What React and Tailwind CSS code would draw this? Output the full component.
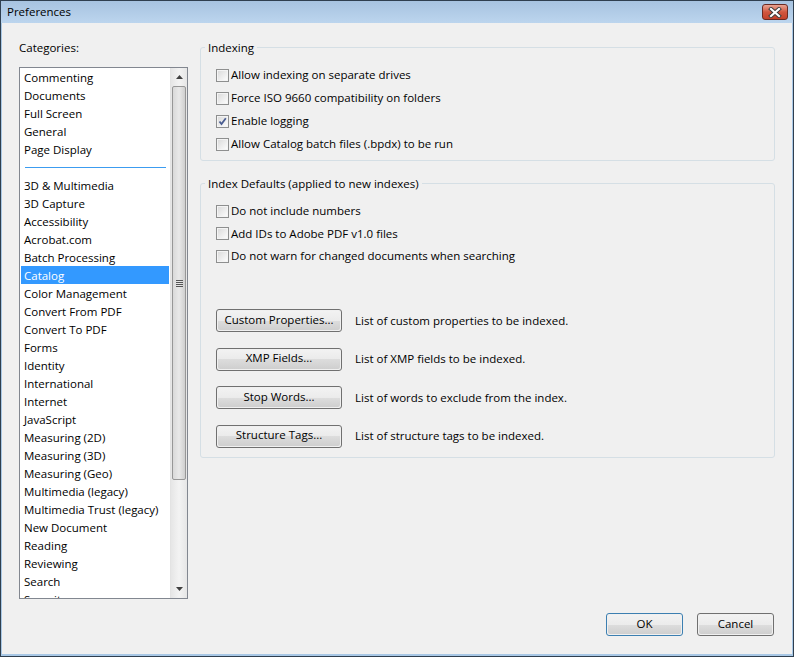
import React from 'react';

const font = { fontFamily: '"Open Sans", "Noto Sans", sans-serif' };

const topCats = ['Commenting', 'Documents', 'Full Screen', 'General', 'Page Display'];
const moreCats = [
    '3D & Multimedia', '3D Capture', 'Accessibility', 'Acrobat.com', 'Batch Processing', 'Catalog',
    'Color Management', 'Convert From PDF', 'Convert To PDF', 'Forms', 'Identity', 'International',
    'Internet', 'JavaScript', 'Measuring (2D)', 'Measuring (3D)', 'Measuring (Geo)', 'Multimedia (legacy)',
    'Multimedia Trust (legacy)', 'New Document', 'Reading', 'Reviewing', 'Search', 'Security',
];

const Checkbox = ({ checked }) => (
    <span className="w-[13px] h-[13px] border border-[#8e8f8f] bg-white flex items-center justify-center shrink-0">
        <span className="w-[11px] h-[11px] border border-[#f4f4f4] bg-gradient-to-br from-[#dcdcdc] to-[#fbfbfb] flex items-center justify-center">
            {checked && (
                <svg width="9" height="9" viewBox="0 0 9 9">
                    <path d="M1.5 4.5 L3.5 7 L7.8 1.2" stroke="#4a5d91" strokeWidth="1.8" fill="none" />
                </svg>
            )}
        </span>
    </span>
);

const CheckRow = ({ label, checked }) => (
    <label className="flex items-center gap-[2px] h-[16px]">
        <Checkbox checked={checked} />
        <span>{label}</span>
    </label>
);

const WinButton = ({ children, w = 'w-[126px]', def }) => (
    <button className={`${w} h-[23px] rounded-[3px] border ${def ? 'border-[#3c7fb1]' : 'border-[#707070]'} p-[1px] text-black`}>
        <span className="flex flex-col w-full h-full rounded-[2px] overflow-hidden">
            <span className="flex-1 bg-gradient-to-b from-[#f2f2f2] to-[#ebebeb]" />
            <span className="flex-1 bg-gradient-to-b from-[#dddddd] to-[#cfcfcf]" />
        </span>
        <span className="relative -mt-[21px] flex h-[21px] items-center justify-center">{children}</span>
    </button>
);

const App = () => {
    return (
        <div className="w-[794px] h-[657px] border border-[#2f3f4f] bg-[#a9c8e6]" style={font}>
            <div className="flex flex-col h-full text-[11.5px] text-black leading-[16px]">
                {/* ***************************** title bar ***************************** */}
                <div className="h-[22px] flex items-center justify-between pl-[6px] pr-[5px] bg-gradient-to-b from-[#a7c3e0] to-[#bcd5ee]">
                    <span className="text-[11.5px]">Preferences</span>
                    <span className="w-[26px] h-[16px] rounded-[3px] border border-[#6b2a22] bg-gradient-to-b from-[#e8a493] via-[#d0563f] to-[#c4412a] flex items-center justify-center">
                        <svg width="14" height="11" viewBox="0 0 14 11">
                            <path d="M3 2 L11 9 M11 2 L3 9" stroke="#3a3a3a" strokeWidth="4" strokeLinecap="square" />
                            <path d="M3 2 L11 9 M11 2 L3 9" stroke="#ffffff" strokeWidth="2.2" strokeLinecap="square" />
                        </svg>
                    </span>
                </div>

                {/* ***************************** body ***************************** */}
                <div className="flex-1 mx-[1px] mb-[2px] bg-[#f0f0f0] flex flex-col px-[17px] pt-[16px]">
                    <div className="flex gap-[12px]">
                        {/* categories */}
                        <div className="w-[169px] shrink-0">
                            <div className="h-[16px] leading-[17px]">Categories:</div>
                            <div className="mt-[12px] h-[532px] border border-[#828790] bg-white flex overflow-hidden">
                                <div className="flex-1 overflow-hidden mr-[1px]">
                                    {topCats.map((c) => (
                                        <div key={c} className="h-[18px] leading-[20px] pl-[4px]">{c}</div>
                                    ))}
                                    <div className="h-[18px] flex items-center pl-[5px] pr-[3px]">
                                        <div className="w-full h-[1px] bg-[#3c9cf0]" />
                                    </div>
                                    {moreCats.map((c) => (
                                        <div
                                            key={c}
                                            className={`h-[18px] leading-[20px] pl-[3px] ml-[1px] ${c === 'Catalog' ? 'bg-[#3399ff] text-white' : ''}`}
                                        >
                                            {c}
                                        </div>
                                    ))}
                                </div>
                                {/* scrollbar */}
                                <div className="w-[17px] shrink-0 border-l border-[#e3e3e3] bg-gradient-to-r from-[#e6e6e6] via-[#f3f3f3] to-[#e6e6e6] flex flex-col">
                                    <div className="h-[18px] flex items-center justify-center">
                                        <svg width="7" height="4" viewBox="0 0 7 4"><path d="M3.5 0 L7 4 L0 4 Z" fill="#404040" /></svg>
                                    </div>
                                    <div className="h-[394px] mx-[1px] rounded-[2px] border border-[#979797] bg-gradient-to-r from-[#d9d9d9] via-[#e9e9e9] to-[#cfcfcf] flex items-center justify-center">
                                        <div className="flex flex-col gap-[1px]">
                                            <div className="w-[7px] h-[1px] bg-[#555]" />
                                            <div className="w-[7px] h-[1px] bg-[#555]" />
                                            <div className="w-[7px] h-[1px] bg-[#555]" />
                                            <div className="w-[7px] h-[1px] bg-[#555]" />
                                        </div>
                                    </div>
                                    <div className="flex-1" />
                                    <div className="h-[18px] flex items-center justify-center">
                                        <svg width="7" height="4" viewBox="0 0 7 4"><path d="M0 0 L7 0 L3.5 4 Z" fill="#404040" /></svg>
                                    </div>
                                </div>
                            </div>
                        </div>

                        {/* right pane */}
                        <div className="flex-1 flex flex-col">
                            <fieldset className="border border-[#d5dfe5] rounded-[3px] pl-[15px] pt-[12px] pb-[8px] flex flex-col gap-[7px]">
                                <legend className="-ml-[11px] px-[3px] h-[16px] leading-[17px]">Indexing</legend>
                                <CheckRow label="Allow indexing on separate drives" />
                                <CheckRow label="Force ISO 9660 compatibility on folders" />
                                <CheckRow label="Enable logging" checked />
                                <CheckRow label="Allow Catalog batch files (.bpdx) to be run" />
                            </fieldset>

                            <fieldset className="mt-[14px] border border-[#d5dfe5] rounded-[3px] pl-[15px] pt-[12px] pb-[9px]">
                                <legend className="-ml-[11px] px-[3px] h-[16px] leading-[17px]">Index Defaults (applied to new indexes)</legend>
                                <div className="flex flex-col gap-[6.5px]">
                                    <CheckRow label="Do not include numbers" />
                                    <CheckRow label="Add IDs to Adobe PDF v1.0 files" />
                                    <CheckRow label="Do not warn for changed documents when searching" />
                                </div>
                                <div className="mt-[45px] flex flex-col gap-[15.5px]">
                                    {[
                                        ['Custom Properties...', 'List of custom properties to be indexed.'],
                                        ['XMP Fields...', 'List of XMP fields to be indexed.'],
                                        ['Stop Words...', 'List of words to exclude from the index.'],
                                        ['Structure Tags...', 'List of structure tags to be indexed.'],
                                    ].map(([b, d]) => (
                                        <div key={b} className="flex items-center gap-[13px]">
                                            <WinButton>{b}</WinButton>
                                            <span>{d}</span>
                                        </div>
                                    ))}
                                </div>
                            </fieldset>
                        </div>
                    </div>

                    {/* bottom buttons */}
                    <div className="mt-[14px] flex justify-end gap-[14px] pr-[1px]">
                        <WinButton w="w-[77px]" def>OK</WinButton>
                        <WinButton w="w-[77px]">Cancel</WinButton>
                    </div>
                </div>
            </div>
        </div>
    );
};

export default App;
